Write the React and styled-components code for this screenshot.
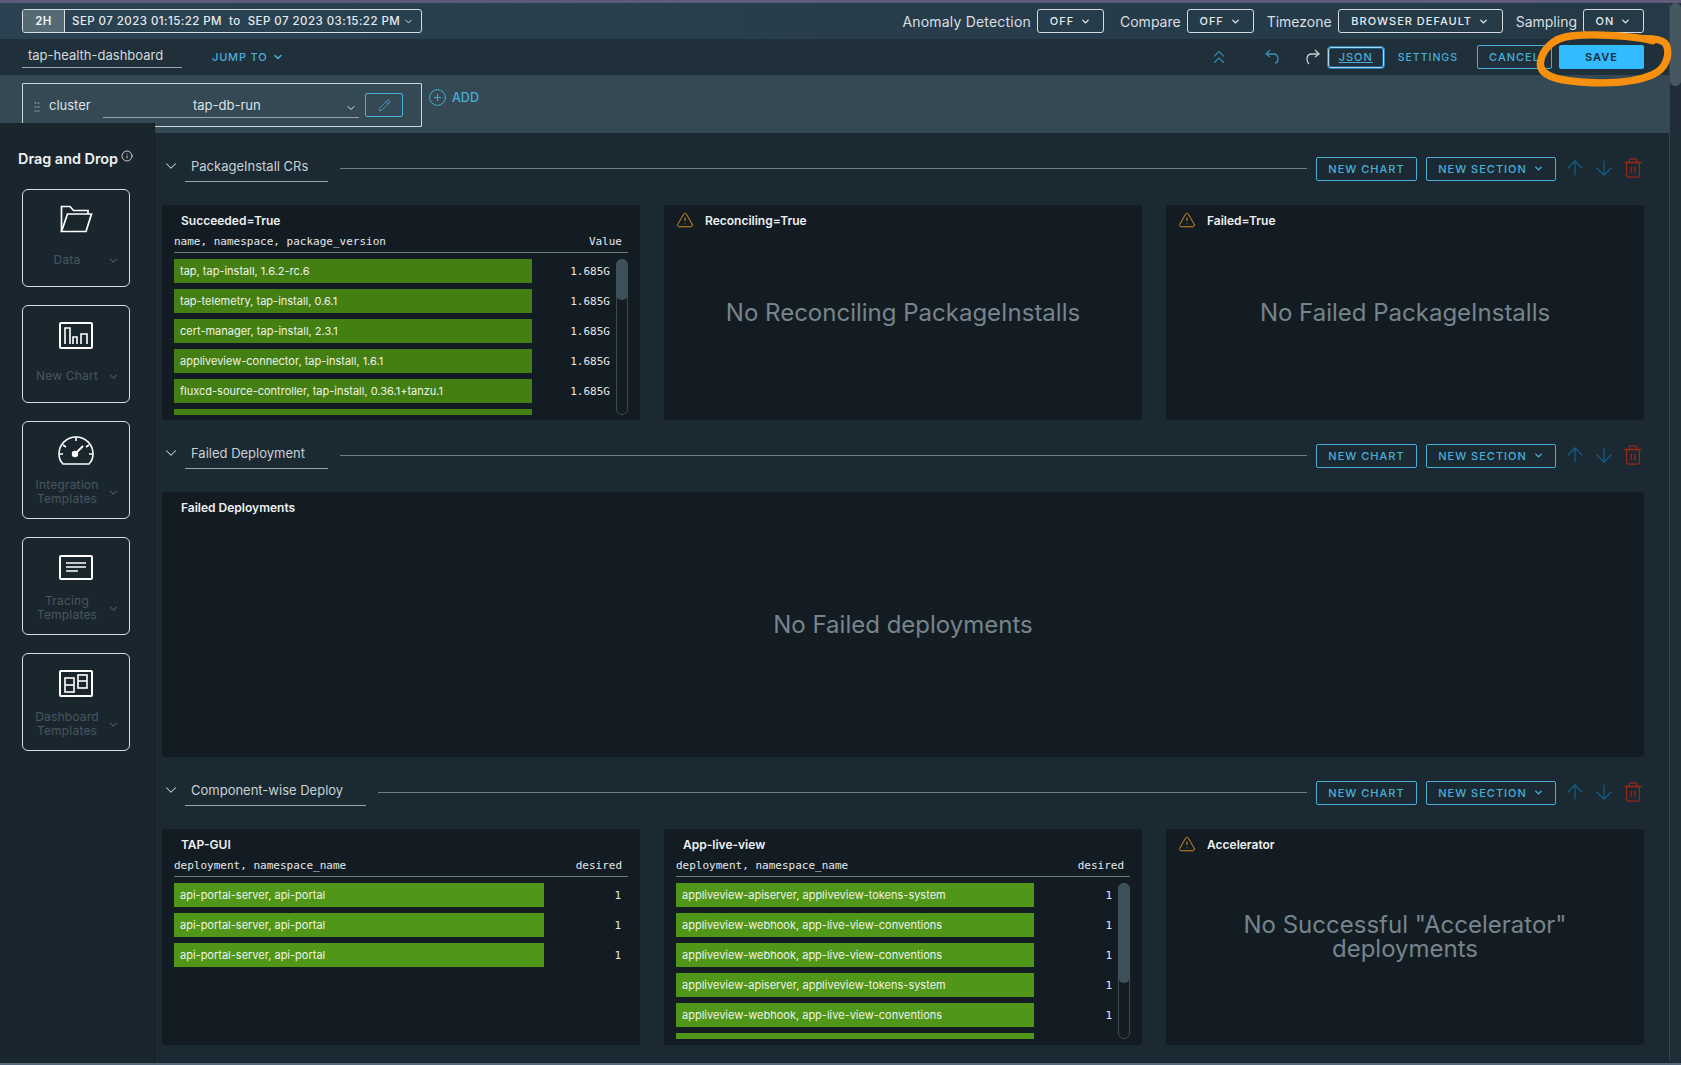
import React from "react";
import styled, { createGlobalStyle } from "styled-components";
import {
  ArrowDown,
  ArrowUp,
  ChevronDown,
  ChevronsUp,
  CirclePlus,
  Info,
  Pencil,
  Trash2,
  TriangleAlert,
} from "lucide-react";

const GlobalStyle = createGlobalStyle`
  html, body {
    margin: 0;
    height: 100%;
    overflow: hidden;
    background: #1b2a32;
  }
  body {
    font-family: Inter, "Noto Sans", sans-serif;
  }
`;

const packageRows = [
  "tap, tap-install, 1.6.2-rc.6",
  "tap-telemetry, tap-install, 0.6.1",
  "cert-manager, tap-install, 2.3.1",
  "appliveview-connector, tap-install, 1.6.1",
  "fluxcd-source-controller, tap-install, 0.36.1+tanzu.1",
  "",
].map((label) => ({ label, value: label ? "1.685G" : "" }));

const tapGuiRows = [1, 2, 3].map(() => ({
  label: "api-portal-server, api-portal",
  value: "1",
}));

const liveViewRows = [
  "appliveview-apiserver, appliveview-tokens-system",
  "appliveview-webhook, app-live-view-conventions",
  "appliveview-webhook, app-live-view-conventions",
  "appliveview-apiserver, appliveview-tokens-system",
  "appliveview-webhook, app-live-view-conventions",
  "",
].map((label) => ({ label, value: label ? "1" : "" }));

const App = () => {
  return (
    <Page>
      <GlobalStyle />
      <TopStrip />
      <Frame>
        <Column>
          <TopBar>
            <DateRange>
              <RangeTag>2H</RangeTag>
              <RangeText>
                SEP 07 2023 01:15:22 PM&nbsp; to &nbsp;SEP 07 2023 03:15:22 PM
                <ChevronDown size={11} />
              </RangeText>
            </DateRange>
            <TopControls>
              <Option label="Anomaly Detection" value="OFF" width={67} />
              <Option label="Compare" value="OFF" width={67} />
              <Option label="Timezone" value="BROWSER DEFAULT" width={165} />
              <Option label="Sampling" value="ON" width={61} />
            </TopControls>
          </TopBar>
          <Toolbar>
            <ToolbarLeft>
              <DashboardName>tap-health-dashboard</DashboardName>
              <JumpTo>
                JUMP TO
                <ChevronDown size={12} strokeWidth={3} />
              </JumpTo>
            </ToolbarLeft>
            <ToolbarRight>
              <ToolIcon $left={0}>
                <ChevronsUp size={22} strokeWidth={1.2} />
              </ToolIcon>
              <ToolIcon $left={33}>
                <UndoIcon />
              </ToolIcon>
              <ToolIcon $left={23}>
                <RedoIcon />
              </ToolIcon>
              <JsonButton>JSON</JsonButton>
              <SettingsLink>SETTINGS</SettingsLink>
              <CancelButton>CANCEL</CancelButton>
              <SaveButton>SAVE</SaveButton>
            </ToolbarRight>
          </Toolbar>
          <FilterBar>
            <FilterBox>
              <Grip />
              <FilterName>cluster</FilterName>
              <FilterSelect>
                <span>tap-db-run</span>
                <ChevronDown size={12} />
              </FilterSelect>
              <PencilButton>
                <Pencil size={13} strokeWidth={1.4} />
              </PencilButton>
            </FilterBox>
            <AddLink>
              <CirclePlus size={19} strokeWidth={1.2} />
              ADD
            </AddLink>
          </FilterBar>
          <Body>
            <Sidebar>
              <SideTitle>
                Drag and Drop
                <Info size={12} strokeWidth={1.6} />
              </SideTitle>
              <SideCard icon={<FolderIcon />} label={["Data"]} />
              <SideCard icon={<ChartIcon />} label={["New Chart"]} />
              <SideCard icon={<GaugeIcon />} label={["Integration", "Templates"]} />
              <SideCard icon={<TextIcon />} label={["Tracing", "Templates"]} />
              <SideCard icon={<LayoutIcon />} label={["Dashboard", "Templates"]} />
            </Sidebar>
            <Main>
              <DashSection title="PackageInstall CRs" titleWidth={143}>
                <PanelGrid>
                  <Panel $height={215}>
                    <PanelTitle>Succeeded=True</PanelTitle>
                    <DataTable
                      name="name, namespace, package_version"
                      valueName="Value"
                      rows={packageRows}
                      barWidth={358}
                      barColor="#447f14"
                      thumb={41}
                    />
                  </Panel>
                  <Panel $height={215}>
                    <PanelTitle $warn>
                      <Warning />
                      Reconciling=True
                    </PanelTitle>
                    <EmptyText>No Reconciling PackageInstalls</EmptyText>
                  </Panel>
                  <Panel $height={215}>
                    <PanelTitle $warn>
                      <Warning />
                      Failed=True
                    </PanelTitle>
                    <EmptyText>No Failed PackageInstalls</EmptyText>
                  </Panel>
                </PanelGrid>
              </DashSection>
              <DashSection title="Failed Deployment" titleWidth={143}>
                <Panel $height={265}>
                  <PanelTitle>Failed Deployments</PanelTitle>
                  <EmptyText>No Failed deployments</EmptyText>
                </Panel>
              </DashSection>
              <DashSection title="Component-wise Deploy" titleWidth={181}>
                <PanelGrid>
                  <Panel $height={216}>
                    <PanelTitle>TAP-GUI</PanelTitle>
                    <DataTable
                      name="deployment, namespace_name"
                      valueName="desired"
                      rows={tapGuiRows}
                      barWidth={370}
                      barColor="#4f9619"
                    />
                  </Panel>
                  <Panel $height={216}>
                    <PanelTitle>App-live-view</PanelTitle>
                    <DataTable
                      name="deployment, namespace_name"
                      valueName="desired"
                      rows={liveViewRows}
                      barWidth={358}
                      barColor="#4f9619"
                      thumb={100}
                    />
                  </Panel>
                  <Panel $height={216}>
                    <PanelTitle $warn>
                      <Warning />
                      Accelerator
                    </PanelTitle>
                    <EmptyText>
                      <EmptyLines>
                        No Successful "Accelerator"
                        <br />
                        deployments
                      </EmptyLines>
                    </EmptyText>
                  </Panel>
                </PanelGrid>
              </DashSection>
            </Main>
          </Body>
        </Column>
        <ScrollRail>
          <RailThumb />
        </ScrollRail>
      </Frame>
      <BottomStrip />
      <Scribble viewBox="0 0 480 330">
        <path d="M395 122 C340 108 220 100 150 108 C95 114 62 150 58 190 C56 225 100 240 180 246 C260 252 340 248 395 224 C435 206 448 165 436 135 C428 118 400 116 370 116" />
      </Scribble>
    </Page>
  );
};

const Option = ({ label, value, width }) => (
  <OptionGroup>
    <OptionLabel>{label}</OptionLabel>
    <OptionButton $width={width}>
      {value}
      <ChevronDown size={11} strokeWidth={3} />
    </OptionButton>
  </OptionGroup>
);

const SideCard = ({ icon, label }) => (
  <Card>
    <CardIcon>{icon}</CardIcon>
    <CardFooter>
      <CardLabel>
        {label.map((line) => (
          <div key={line}>{line}</div>
        ))}
      </CardLabel>
      <CardChevron>
        <ChevronDown size={13} strokeWidth={2} />
      </CardChevron>
    </CardFooter>
  </Card>
);

const DashSection = ({ title, titleWidth, children }) => (
  <Section>
    <SectionHeader>
      <Collapse>
        <ChevronDown size={20} strokeWidth={1.4} />
      </Collapse>
      <SectionTitle $width={titleWidth}>{title}</SectionTitle>
      <SectionRule />
      <SectionButton>NEW CHART</SectionButton>
      <SectionMenu>
        NEW SECTION
        <ChevronDown size={11} strokeWidth={3} />
      </SectionMenu>
      <MoveIcon $left={7}>
        <ArrowUp size={24} strokeWidth={1.2} />
      </MoveIcon>
      <MoveIcon $left={5}>
        <ArrowDown size={24} strokeWidth={1.2} />
      </MoveIcon>
      <DeleteIcon>
        <Trash2 size={22} strokeWidth={1.4} />
      </DeleteIcon>
    </SectionHeader>
    {children}
  </Section>
);

const DataTable = ({ name, valueName, rows, barWidth, barColor, thumb }) => (
  <Table>
    <TableHead>
      <span>{name}</span>
      <span>{valueName}</span>
    </TableHead>
    <TableBody>
      <Rows>
        {rows.map((row, index) => (
          <Row key={index}>
            <Bar $width={barWidth} $color={barColor}>
              {row.label}
            </Bar>
            <RowValue $scroll={Boolean(thumb)}>{row.value}</RowValue>
          </Row>
        ))}
      </Rows>
      {thumb && (
        <Track>
          <Thumb style={{ height: thumb }} />
        </Track>
      )}
    </TableBody>
  </Table>
);

const Warning = () => <TriangleAlert size={18} strokeWidth={1.3} color="#d28f1e" />;

const UndoIcon = () => (
  <svg width="18" height="18" viewBox="0 0 18 18" fill="none" stroke="currentColor" strokeWidth="1.3">
    <path d="M7 2 L3 6 L7 9" />
    <path d="M3 6 H10 C13 6 15 8 15 11 C15 13.5 13.5 15 12 15.5" />
  </svg>
);

const RedoIcon = () => (
  <svg width="18" height="18" viewBox="0 0 18 18" fill="none" stroke="#c9d0d5" strokeWidth="1.3">
    <path d="M11 2 L15 6 L11 9" />
    <path d="M15 6 H8 C5 6 3 8 3 11 C3 13.5 4 15 5 16" />
  </svg>
);

const FolderIcon = () => (
  <svg width="33" height="28" viewBox="0 0 33 28" fill="none" stroke="#fff" strokeWidth="1.7">
    <path d="M1.5 26.5 V1.5 H10 L13.5 5.5 H28 V9" />
    <path d="M1.5 26.5 H26 L31.5 9 H7.5 Z" />
  </svg>
);

const ChartIcon = () => (
  <svg width="34" height="27" viewBox="0 0 34 27" fill="none" stroke="#fff" strokeWidth="1.6">
    <rect x="1" y="1" width="32" height="25" rx="1" strokeWidth="2" />
    <path d="M6 22 V6 H11 V22" />
    <path d="M14 22 V15 H18 V22" />
    <path d="M22 22 V12 H28 V22" />
  </svg>
);

const GaugeIcon = () => (
  <svg width="36" height="30" viewBox="0 0 36 30" fill="none" stroke="#fff" strokeWidth="1.6">
    <path d="M5 28 C2 25 1 21 1 18 C1 8.5 8.5 1 18 1 C27.5 1 35 8.5 35 18 C35 21 34 25 31 28 Z" />
    <path d="M18 1 V5 M5 9 L8 11 M31 9 L28 11 M1.5 18 H5 M31 18 H34.5" />
    <circle cx="17" cy="18" r="2.4" fill="#fff" />
    <path d="M18 17 L25 10" strokeWidth="2" />
  </svg>
);

const TextIcon = () => (
  <svg width="34" height="25" viewBox="0 0 34 25" fill="none" stroke="#fff" strokeWidth="1.6">
    <rect x="1" y="1" width="32" height="23" rx="1" strokeWidth="2" />
    <path d="M7 8 H27 M7 12 H27 M7 16 H19" />
  </svg>
);

const LayoutIcon = () => (
  <svg width="34" height="27" viewBox="0 0 34 27" fill="none" stroke="#fff" strokeWidth="1.6">
    <rect x="1" y="1" width="32" height="25" rx="1" strokeWidth="2" />
    <rect x="6" y="8" width="9" height="14" />
    <path d="M6 15 H15" />
    <rect x="19" y="5" width="9" height="13" />
    <path d="M19 11 H28" />
  </svg>
);

const Page = styled.div`
  position: relative;
  display: flex;
  flex-direction: column;
  width: 1681px;
  height: 1065px;
  overflow: hidden;
  background: #1b2a32;
`;

const TopStrip = styled.div`
  flex: none;
  height: 3px;
  background: #5d5a7c;
`;

const BottomStrip = styled.div`
  flex: none;
  height: 2px;
  background: #56697a;
`;

const Frame = styled.div`
  flex: 1;
  min-height: 0;
  display: flex;
`;

const Column = styled.div`
  flex: 1;
  min-width: 0;
  display: flex;
  flex-direction: column;
`;

const ScrollRail = styled.div`
  flex: none;
  width: 12px;
  box-sizing: border-box;
  border-left: 1px solid #35464f;
  background: #1e2d36;
  border-bottom-left-radius: 6px;
  border-bottom-right-radius: 6px;
`;

const RailThumb = styled.div`
  width: 11px;
  height: 83px;
  background: #46575f;
  border-radius: 5px;
`;

const TopBar = styled.div`
  flex: none;
  height: 36px;
  box-sizing: border-box;
  padding: 6px 25px 6px 22px;
  display: flex;
  align-items: center;
  justify-content: space-between;
  background: linear-gradient(90deg, #2a4252, #253946);
`;

const DateRange = styled.div`
  width: 400px;
  height: 24px;
  box-sizing: border-box;
  display: flex;
  border: 1px solid #d5dbdf;
  border-radius: 3px;
  overflow: hidden;
`;

const RangeTag = styled.div`
  width: 41px;
  display: flex;
  align-items: center;
  justify-content: center;
  border-right: 1px solid #d5dbdf;
  background: #566a74;
  color: #f1f3f4;
  font-size: 11.5px;
  font-weight: 600;
  letter-spacing: 0.5px;
`;

const RangeText = styled.div`
  flex: 1;
  padding-left: 7px;
  display: flex;
  align-items: center;
  gap: 3px;
  color: #e6eaec;
  font-size: 11.5px;
  font-weight: 500;
  letter-spacing: 0.45px;
  white-space: nowrap;
`;

const TopControls = styled.div`
  display: flex;
  align-items: center;
  gap: 13px;
`;

const OptionGroup = styled.div`
  display: flex;
  align-items: center;
  gap: 6px;

  &:first-child {
    margin-right: 3px;
  }

  &:first-child span {
    letter-spacing: 0.2px;
  }
`;

const OptionLabel = styled.span`
  color: #d9dfe2;
  font-size: 14px;
`;

const OptionButton = styled.div`
  width: ${(props) => props.$width}px;
  height: 24px;
  box-sizing: border-box;
  display: flex;
  align-items: center;
  justify-content: center;
  gap: 6px;
  border: 1px solid #d5dbdf;
  border-radius: 3px;
  color: #e6eaec;
  font-size: 11px;
  font-weight: 500;
  letter-spacing: 1px;
`;

const Toolbar = styled.div`
  flex: none;
  height: 36px;
  box-sizing: border-box;
  padding-right: 25px;
  padding-left: 22px;
  display: flex;
  align-items: center;
  justify-content: space-between;
  background: #1f303a;
`;

const ToolbarLeft = styled.div`
  display: flex;
  align-items: center;
`;

const DashboardName = styled.div`
  width: 160px;
  height: 26px;
  margin-bottom: 4px;
  box-sizing: border-box;
  padding: 5px 0 0 6px;
  border-bottom: 1px solid #98a4ab;
  color: #d3dade;
  font-size: 13px;
`;

const JumpTo = styled.div`
  margin-left: 30px;
  display: flex;
  align-items: center;
  gap: 5px;
  color: #49afd9;
  font-size: 11px;
  font-weight: 500;
  letter-spacing: 0.8px;
`;

const ToolbarRight = styled.div`
  display: flex;
  align-items: center;
  color: #3a8fb5;
`;

const ToolIcon = styled.div`
  margin-left: ${(props) => props.$left}px;
  display: flex;
`;

const JsonButton = styled.div`
  margin-left: 6px;
  width: 56px;
  height: 21px;
  box-sizing: border-box;
  display: flex;
  align-items: center;
  justify-content: center;
  border: 1px solid #a9d8f0;
  box-shadow: 0 0 0 1px #2a7fb5, inset 0 0 0 1px #1f5f8f;
  border-radius: 3px;
  color: #49afd9;
  font-size: 11px;
  font-weight: 500;
  letter-spacing: 1px;
  text-decoration: underline;
`;

const SettingsLink = styled.div`
  margin-left: 14px;
  color: #49afd9;
  font-size: 10.5px;
  font-weight: 500;
  letter-spacing: 1px;
`;

const OutlineButton = styled.div`
  height: 24px;
  width: 101px;
  box-sizing: border-box;
  display: flex;
  align-items: center;
  justify-content: center;
  border: 1px solid #49afd9;
  border-radius: 2px;
  color: #49afd9;
  font-size: 11px;
  font-weight: 500;
  letter-spacing: 1px;
  white-space: nowrap;
`;

const CancelButton = styled(OutlineButton)`
  margin-left: 19px;
  width: 75px;
`;

const SaveButton = styled.div`
  margin-left: 7px;
  width: 85px;
  height: 24px;
  display: flex;
  align-items: center;
  justify-content: center;
  border-radius: 2px;
  background: #33bbff;
  color: #0f2a38;
  font-size: 11px;
  font-weight: 600;
  letter-spacing: 1px;
`;

const FilterBar = styled.div`
  flex: none;
  height: 58px;
  box-sizing: border-box;
  padding: 8px 0 0 22px;
  display: flex;
  align-items: flex-start;
  background: #344954;
`;

const FilterBox = styled.div`
  width: 400px;
  height: 44px;
  box-sizing: border-box;
  padding: 9px 0 0 11px;
  display: flex;
  align-items: flex-start;
  border: 1px solid #cfd6da;
  border-radius: 1px;
`;

const Grip = styled.div`
  width: 6px;
  height: 11px;
  margin-top: 8px;
  background-image: radial-gradient(circle, #6f8089 1px, transparent 1.2px);
  background-size: 3px 4px;
`;

const FilterName = styled.div`
  margin: 4px 0 0 9px;
  width: 54px;
  color: #dde2e5;
  font-size: 13px;
`;

const FilterSelect = styled.div`
  width: 256px;
  height: 25px;
  box-sizing: border-box;
  padding: 4px 0 0 90px;
  display: flex;
  justify-content: space-between;
  border-bottom: 1px solid #98a4ab;
  color: #dde2e5;
  font-size: 13px;

  svg {
    margin: 5px 2px 0 0;
  }
`;

const PencilButton = styled.div`
  margin: 0 0 0 6px;
  width: 38px;
  height: 24px;
  box-sizing: border-box;
  display: flex;
  align-items: center;
  justify-content: center;
  border: 1px solid #49afd9;
  border-radius: 2px;
  color: #49afd9;
`;

const AddLink = styled.div`
  margin: 5px 0 0 6px;
  display: flex;
  align-items: center;
  gap: 5px;
  color: #49afd9;
  font-size: 12.5px;
  font-weight: 500;
`;

const Body = styled.div`
  flex: 1;
  min-height: 0;
  display: flex;
`;

const Sidebar = styled.div`
  position: relative;
  flex: none;
  width: 155px;
  margin-top: -10px;
  box-sizing: border-box;
  padding: 27px 0 0 22px;
  border-right: 1px solid #141e24;
  background: #1a262d;
`;

const SideTitle = styled.div`
  height: 39px;
  margin-left: -4px;
  display: flex;
  align-items: flex-start;
  gap: 3px;
  color: #eef1f2;
  font-size: 14.4px;
  font-weight: 600;
  white-space: nowrap;
`;

const Card = styled.div`
  width: 108px;
  height: 98px;
  margin-bottom: 18px;
  box-sizing: border-box;
  padding-top: 11px;
  border: 1px solid #d5dbdf;
  border-radius: 6px;
`;

const CardIcon = styled.div`
  height: 36px;
  display: flex;
  align-items: center;
  justify-content: center;
  color: #fff;
`;

const CardFooter = styled.div`
  height: 30px;
  margin-top: 8px;
  display: flex;
  align-items: center;
  color: #47565f;
`;

const CardLabel = styled.div`
  width: 88px;
  text-align: center;
  font-size: 12px;
  line-height: 14px;
  letter-spacing: 0.2px;
`;

const CardChevron = styled.div`
  margin-left: -4px;
  display: flex;
`;

const Main = styled.div`
  flex: 1;
  min-width: 0;
  box-sizing: border-box;
  padding: 12px 25px 0 7px;
  display: flex;
  flex-direction: column;
  gap: 12px;
`;

const Section = styled.div`
  display: flex;
  flex-direction: column;
  gap: 14px;
`;

const SectionHeader = styled.div`
  height: 46px;
  display: flex;
  align-items: center;
`;

const Collapse = styled.div`
  width: 18px;
  margin-right: 5px;
  display: flex;
  justify-content: center;
  margin-top: -4px;
  color: #c9d0d5;
`;

const SectionTitle = styled.div`
  width: ${(props) => props.$width}px;
  height: 26px;
  margin-top: 2px;
  box-sizing: border-box;
  padding: 0 23px 0 6px;
  line-height: 20px;
  overflow: hidden;
  white-space: nowrap;
  border-bottom: 1px solid #98a4ab;
  color: #c8d0d5;
  font-size: 13px;
`;

const SectionRule = styled.div`
  flex: 1;
  height: 1px;
  margin: 0 9px 0 12px;
  background: #6d7d86;
`;

const SectionButton = styled(OutlineButton)`
  margin-top: 1px;
`;

const SectionMenu = styled(OutlineButton)`
  width: 130px;
  margin-top: 1px;
  margin-left: 9px;
  gap: 6px;
`;

const MoveIcon = styled.div`
  margin-left: ${(props) => props.$left}px;
  display: flex;
  color: #155f88;
`;

const DeleteIcon = styled.div`
  margin-left: 6px;
  display: flex;
  color: #9b2618;
`;

const PanelGrid = styled.div`
  display: grid;
  grid-template-columns: repeat(3, 1fr);
  gap: 24px;
`;

const Panel = styled.div`
  height: ${(props) => props.$height}px;
  box-sizing: border-box;
  display: flex;
  flex-direction: column;
  border-radius: 3px;
  background: #141c23;
`;

const PanelTitle = styled.div`
  flex: none;
  height: 30px;
  box-sizing: border-box;
  padding-left: ${(props) => (props.$warn ? "12px" : "19px")};
  display: flex;
  align-items: center;
  gap: 11px;
  color: #eef1f2;
  font-size: 12px;
  font-weight: 600;
`;

const EmptyText = styled.div`
  flex: 1;
  display: flex;
  align-items: center;
  justify-content: center;
  padding-bottom: 30px;
  text-align: center;
  color: #76848c;
  font-size: 24px;
  line-height: 24px;
`;

const EmptyLines = styled.div``;

const Table = styled.div`
  padding: 0 12px;
`;

const TableHead = styled.div`
  height: 17px;
  padding: 0 6px 0 0;
  display: flex;
  justify-content: space-between;
  border-bottom: 1px solid #6d7d86;
  color: #e4e8ea;
  font-family: "DejaVu Sans Mono", monospace;
  font-size: 11px;
  line-height: 13px;
`;

const TableBody = styled.div`
  height: 156px;
  margin-top: 6px;
  display: flex;
`;

const Rows = styled.div`
  flex: 1;
  min-width: 0;
  overflow: hidden;
  display: flex;
  flex-direction: column;
  gap: 6px;
`;

const Row = styled.div`
  flex: none;
  height: 24px;
  display: flex;
  align-items: center;
`;

const Bar = styled.div`
  width: ${(props) => props.$width}px;
  height: 24px;
  box-sizing: border-box;
  padding-left: 6px;
  line-height: 24px;
  white-space: nowrap;
  background: ${(props) => props.$color};
  color: #eef3ea;
  font-size: 11px;
`;

const RowValue = styled.div`
  flex: 1;
  padding-right: ${(props) => (props.$scroll ? "6px" : "7px")};
  text-align: right;
  color: #e4e8ea;
  font-family: "DejaVu Sans Mono", monospace;
  font-size: 11px;
`;

const Track = styled.div`
  flex: none;
  width: 12px;
  box-sizing: border-box;
  border: 1px solid #3a4a53;
  border-radius: 6px;
`;

const Thumb = styled.div`
  margin: -1px;
  border-radius: 6px;
  background: #3e505a;
`;

const Scribble = styled.svg`
  position: absolute;
  top: 0;
  left: 1521px;
  width: 160px;
  height: 110px;
  fill: none;
  stroke: #f7900f;
  stroke-width: 22;
  stroke-linecap: round;
`;

export default App;
